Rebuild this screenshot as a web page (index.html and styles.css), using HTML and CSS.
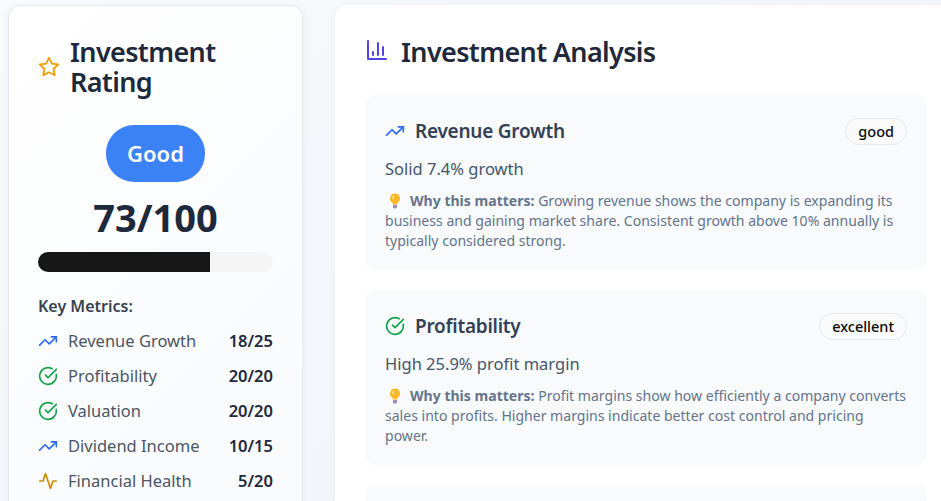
FILE: index.html
```html
<!DOCTYPE html>
<html lang="en">
<head>
    <meta charset="UTF-8">
    <meta name="viewport" content="width=device-width, initial-scale=1.0">
    <link rel="stylesheet" href="styles.css">
    <title>Investment Analysis</title>
</head>
<body>
    <div class="layout">
        <aside class="rating-card">
            <h2 class="rating-title">
                <svg class="icon icon-star" viewBox="0 0 24 24"><polygon points="12 2 15.09 8.26 22 9.27 17 14.14 18.18 21.02 12 17.77 5.82 21.02 7 14.14 2 9.27 8.91 8.26 12 2"/></svg>
                <span>Investment Rating</span>
            </h2>
            <div class="rating-summary">
                <div class="rating-pill">Good</div>
                <div class="rating-score">73/100</div>
            </div>
            <div class="progress"><div class="progress-fill" style="width: 73%"></div></div>
            <h3 class="metrics-title">Key Metrics:</h3>
            <ul class="metrics">
                <li class="metric">
                    <svg class="icon icon-blue" viewBox="0 0 24 24"><polyline points="22 7 13.5 15.5 8.5 10.5 2 17"/><polyline points="16 7 22 7 22 13"/></svg>
                    <span class="metric-name">Revenue Growth</span>
                    <span class="metric-score">18/25</span>
                </li>
                <li class="metric">
                    <svg class="icon icon-green" viewBox="0 0 24 24"><path d="M21.801 10A10 10 0 1 1 17 3.335"/><path d="m9 11 3 3L22 4"/></svg>
                    <span class="metric-name">Profitability</span>
                    <span class="metric-score">20/20</span>
                </li>
                <li class="metric">
                    <svg class="icon icon-green" viewBox="0 0 24 24"><path d="M21.801 10A10 10 0 1 1 17 3.335"/><path d="m9 11 3 3L22 4"/></svg>
                    <span class="metric-name">Valuation</span>
                    <span class="metric-score">20/20</span>
                </li>
                <li class="metric">
                    <svg class="icon icon-blue" viewBox="0 0 24 24"><polyline points="22 7 13.5 15.5 8.5 10.5 2 17"/><polyline points="16 7 22 7 22 13"/></svg>
                    <span class="metric-name">Dividend Income</span>
                    <span class="metric-score">10/15</span>
                </li>
                <li class="metric">
                    <svg class="icon icon-amber" viewBox="0 0 24 24"><path d="M22 12h-4l-3 9L9 3l-3 9H2"/></svg>
                    <span class="metric-name">Financial Health</span>
                    <span class="metric-score">5/20</span>
                </li>
            </ul>
        </aside>

        <main class="analysis-card">
            <h1 class="analysis-title">
                <svg class="icon icon-indigo" viewBox="0 0 24 24"><path d="M3 3v18h18"/><path d="M18 17V9"/><path d="M13 17V5"/><path d="M8 17v-3"/></svg>
                <span>Investment Analysis</span>
            </h1>

            <section class="item">
                <div class="item-head">
                    <svg class="icon icon-blue" viewBox="0 0 24 24"><polyline points="22 7 13.5 15.5 8.5 10.5 2 17"/><polyline points="16 7 22 7 22 13"/></svg>
                    <h3 class="item-title">Revenue Growth</h3>
                    <span class="badge">good</span>
                </div>
                <p class="item-value">Solid 7.4% growth</p>
                <p class="item-why"><svg class="bulb" viewBox="0 0 16 16"><path class="bulb-glass" d="M8 .5a5 5 0 0 0-3 9c.6.5.9 1.1 1 2h4c.1-.9.4-1.500 1-2a5 5 0 0 0-3-9z"/><path class="bulb-shine" d="M6.500 2.500a2.500 2.500 0 0 0-1.500 2.500c0 1 .5 1.500 1 1.500s.5-3 1.500-3.500z"/><path class="bulb-base" d="M6 12h4v2.500l-1 1H7l-1-1z"/></svg><strong>Why this matters:</strong> Growing revenue shows the company is expanding its business and gaining market share. Consistent growth above 10% annually is typically considered strong.</p>
            </section>

            <section class="item">
                <div class="item-head">
                    <svg class="icon icon-green" viewBox="0 0 24 24"><path d="M21.801 10A10 10 0 1 1 17 3.335"/><path d="m9 11 3 3L22 4"/></svg>
                    <h3 class="item-title">Profitability</h3>
                    <span class="badge">excellent</span>
                </div>
                <p class="item-value">High 25.9% profit margin</p>
                <p class="item-why"><svg class="bulb" viewBox="0 0 16 16"><path class="bulb-glass" d="M8 .5a5 5 0 0 0-3 9c.6.5.9 1.1 1 2h4c.1-.9.4-1.500 1-2a5 5 0 0 0-3-9z"/><path class="bulb-shine" d="M6.500 2.500a2.500 2.500 0 0 0-1.500 2.500c0 1 .5 1.500 1 1.500s.5-3 1.500-3.500z"/><path class="bulb-base" d="M6 12h4v2.500l-1 1H7l-1-1z"/></svg><strong>Why this matters:</strong> Profit margins show how efficiently a company converts sales into profits. Higher margins indicate better cost control and pricing power.</p>
            </section>

            <section class="item"></section>
        </main>
    </div>
</body>
</html>
```

FILE: styles.css
```css
* {
    box-sizing: border-box;
}

html, body {
    height: 100vh;
    overflow: hidden;
}

body {
    margin: 0;
    padding: 5px 0 0 8px;
    font-family: 'Noto Sans', sans-serif;
    background: linear-gradient(135deg, #f8fafc 0%, #eef2f9 100%);
    color: #1e293b;
}

.layout {
    display: grid;
    grid-template-columns: 295px 622px;
    gap: 32px;
    align-items: start;
}

.icon {
    fill: none;
    stroke: currentColor;
    stroke-width: 2;
    stroke-linecap: round;
    stroke-linejoin: round;
    flex-shrink: 0;
    width: 20px;
    height: 20px;
}

.icon-star { color: #f59e0b; }
.icon-blue { color: #2f69ee; }
.icon-green { color: #16a34a; }
.icon-amber { color: #ca8a04; }
.icon-indigo { color: #4f46e5; }

/* left card */
.rating-card {
    height: 560px;
    padding: 31px 29px 30px;
    background: linear-gradient(135deg, #ffffff 0%, #f8fafc 100%);
    border: 1px solid #e2e8f0;
    border-radius: 12px;
    box-shadow: 0 2px 8px rgba(15, 23, 42, 0.05);
}

.rating-title {
    display: flex;
    align-items: center;
    gap: 10px;
    margin: 0 0 28px;
    font-size: 27px;
    line-height: 30px;
    font-weight: 600;
    letter-spacing: -0.65px;
}

.rating-title .icon {
    width: 22px;
    height: 22px;
}

.rating-summary {
    display: flex;
    flex-direction: column;
    align-items: center;
}

.rating-pill {
    padding: 12px 21px;
    background-color: #3b82f6;
    color: #fff;
    border-radius: 28px;
    font-size: 22px;
    line-height: 33px;
    font-weight: 600;
}

.rating-score {
    margin-top: 8px;
    font-size: 38px;
    line-height: 54px;
    font-weight: 700;
}

.progress {
    height: 20px;
    margin-top: 8px;
    background-color: #f5f5f5;
    border-radius: 10px;
    overflow: hidden;
}

.progress-fill {
    height: 100%;
    background-color: #171717;
}

.metrics-title {
    margin: 22px 0 5px;
    font-size: 16px;
    line-height: 24px;
    font-weight: 600;
    color: #374151;
}

.metrics {
    list-style: none;
    margin: 0;
    padding: 0;
}

.metric {
    display: flex;
    align-items: center;
    gap: 10px;
    height: 35px;
    font-size: 16.5px;
}

.metric-name {
    flex: 1;
    color: #4b5563;
}

.metric-score {
    font-weight: 600;
    color: #1e293b;
}

/* right card */
.analysis-card {
    height: 560px;
    padding: 29px 30px 30px;
    background-color: #fff;
    border-radius: 12px;
    box-shadow: 0 2px 8px rgba(15, 23, 42, 0.05);
}

.analysis-title {
    display: flex;
    align-items: center;
    gap: 12px;
    margin: 0 0 25px;
    font-size: 27px;
    line-height: 36px;
    font-weight: 600;
    letter-spacing: -0.65px;
}

.analysis-title .icon {
    width: 24px;
    height: 24px;
    margin-top: -5px;
}

.item {
    height: 175px;
    margin-bottom: 20px;
    padding: 20px;
    background-color: #f8fafc;
    border-radius: 10px;
}

.item-head {
    display: flex;
    align-items: center;
    gap: 10px;
    height: 32px;
}

.item-title {
    flex: 1;
    margin: 0;
    font-size: 19px;
    font-weight: 600;
    letter-spacing: -0.25px;
    color: #334155;
}

.badge {
    padding: 3px 12px;
    background-color: #fafafa;
    border: 1px solid #e5e7eb;
    border-radius: 14px;
    font-size: 14.5px;
    line-height: 19px;
    font-weight: 500;
    color: #0a0a0a;
}

.item-value {
    margin: 10px 0 0;
    font-size: 16.5px;
    line-height: 24px;
    color: #475569;
}

.item-why {
    margin: 10px 0 0;
    font-size: 14.05px;
    line-height: 20px;
    color: #64748b;
}

.bulb {
    width: 16px;
    height: 16px;
    margin: 0 7px 0 2px;
    vertical-align: -3px;
}

.bulb-glass { fill: #fbb829; }
.bulb-shine { fill: #fde68a; }
.bulb-base { fill: #a78bba; }
```
